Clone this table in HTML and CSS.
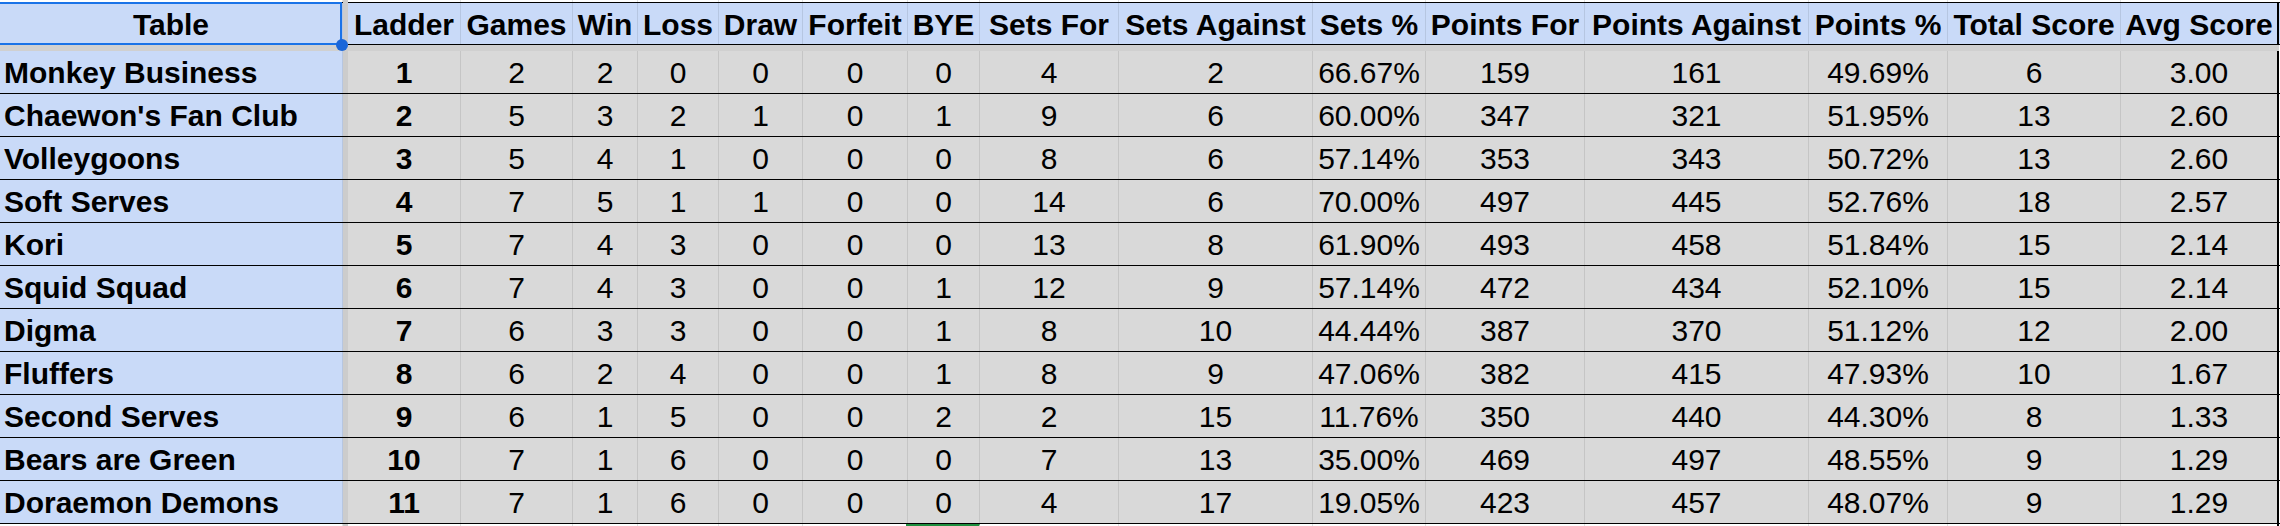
FILE: index.html
```html
<!DOCTYPE html>
<html>
<head>
<meta charset="utf-8">
<title>Ladder Table</title>
<link rel="stylesheet" href="styles.css">
</head>
<body>
<div class="sheet">
  <div class="row top-strip">
    <div class="cell"></div><div class="divider"></div>
    <div class="cell"></div><div class="cell"></div><div class="cell"></div><div class="cell"></div><div class="cell"></div><div class="cell"></div><div class="cell"></div><div class="cell"></div><div class="cell"></div><div class="cell"></div><div class="cell"></div><div class="cell"></div><div class="cell"></div><div class="cell"></div><div class="cell last"></div>
  </div>
  <div class="row head">
    <div class="cell name-head">Table<span class="selection"></span><span class="handle"></span></div><div class="divider"></div>
    <div class="cell">Ladder</div><div class="cell">Games</div><div class="cell">Win</div><div class="cell">Loss</div><div class="cell">Draw</div><div class="cell">Forfeit</div><div class="cell">BYE</div><div class="cell">Sets For</div><div class="cell">Sets Against</div><div class="cell">Sets %</div><div class="cell">Points For</div><div class="cell">Points Against</div><div class="cell">Points %</div><div class="cell">Total Score</div><div class="cell last">Avg Score</div>
  </div>
  <div class="row freeze"><div class="fz"></div><div class="divider"></div><div class="fz rest"></div></div>

  <div class="row data"><div class="cell name">Monkey Business</div><div class="divider"></div><div class="cell rank">1</div><div class="cell">2</div><div class="cell">2</div><div class="cell">0</div><div class="cell">0</div><div class="cell">0</div><div class="cell">0</div><div class="cell">4</div><div class="cell">2</div><div class="cell">66.67%</div><div class="cell">159</div><div class="cell">161</div><div class="cell">49.69%</div><div class="cell">6</div><div class="cell last">3.00</div></div>
  <div class="row data"><div class="cell name">Chaewon's Fan Club</div><div class="divider"></div><div class="cell rank">2</div><div class="cell">5</div><div class="cell">3</div><div class="cell">2</div><div class="cell">1</div><div class="cell">0</div><div class="cell">1</div><div class="cell">9</div><div class="cell">6</div><div class="cell">60.00%</div><div class="cell">347</div><div class="cell">321</div><div class="cell">51.95%</div><div class="cell">13</div><div class="cell last">2.60</div></div>
  <div class="row data"><div class="cell name">Volleygoons</div><div class="divider"></div><div class="cell rank">3</div><div class="cell">5</div><div class="cell">4</div><div class="cell">1</div><div class="cell">0</div><div class="cell">0</div><div class="cell">0</div><div class="cell">8</div><div class="cell">6</div><div class="cell">57.14%</div><div class="cell">353</div><div class="cell">343</div><div class="cell">50.72%</div><div class="cell">13</div><div class="cell last">2.60</div></div>
  <div class="row data"><div class="cell name">Soft Serves</div><div class="divider"></div><div class="cell rank">4</div><div class="cell">7</div><div class="cell">5</div><div class="cell">1</div><div class="cell">1</div><div class="cell">0</div><div class="cell">0</div><div class="cell">14</div><div class="cell">6</div><div class="cell">70.00%</div><div class="cell">497</div><div class="cell">445</div><div class="cell">52.76%</div><div class="cell">18</div><div class="cell last">2.57</div></div>
  <div class="row data"><div class="cell name">Kori</div><div class="divider"></div><div class="cell rank">5</div><div class="cell">7</div><div class="cell">4</div><div class="cell">3</div><div class="cell">0</div><div class="cell">0</div><div class="cell">0</div><div class="cell">13</div><div class="cell">8</div><div class="cell">61.90%</div><div class="cell">493</div><div class="cell">458</div><div class="cell">51.84%</div><div class="cell">15</div><div class="cell last">2.14</div></div>
  <div class="row data"><div class="cell name">Squid Squad</div><div class="divider"></div><div class="cell rank">6</div><div class="cell">7</div><div class="cell">4</div><div class="cell">3</div><div class="cell">0</div><div class="cell">0</div><div class="cell">1</div><div class="cell">12</div><div class="cell">9</div><div class="cell">57.14%</div><div class="cell">472</div><div class="cell">434</div><div class="cell">52.10%</div><div class="cell">15</div><div class="cell last">2.14</div></div>
  <div class="row data"><div class="cell name">Digma</div><div class="divider"></div><div class="cell rank">7</div><div class="cell">6</div><div class="cell">3</div><div class="cell">3</div><div class="cell">0</div><div class="cell">0</div><div class="cell">1</div><div class="cell">8</div><div class="cell">10</div><div class="cell">44.44%</div><div class="cell">387</div><div class="cell">370</div><div class="cell">51.12%</div><div class="cell">12</div><div class="cell last">2.00</div></div>
  <div class="row data"><div class="cell name">Fluffers</div><div class="divider"></div><div class="cell rank">8</div><div class="cell">6</div><div class="cell">2</div><div class="cell">4</div><div class="cell">0</div><div class="cell">0</div><div class="cell">1</div><div class="cell">8</div><div class="cell">9</div><div class="cell">47.06%</div><div class="cell">382</div><div class="cell">415</div><div class="cell">47.93%</div><div class="cell">10</div><div class="cell last">1.67</div></div>
  <div class="row data"><div class="cell name">Second Serves</div><div class="divider"></div><div class="cell rank">9</div><div class="cell">6</div><div class="cell">1</div><div class="cell">5</div><div class="cell">0</div><div class="cell">0</div><div class="cell">2</div><div class="cell">2</div><div class="cell">15</div><div class="cell">11.76%</div><div class="cell">350</div><div class="cell">440</div><div class="cell">44.30%</div><div class="cell">8</div><div class="cell last">1.33</div></div>
  <div class="row data"><div class="cell name">Bears are Green</div><div class="divider"></div><div class="cell rank">10</div><div class="cell">7</div><div class="cell">1</div><div class="cell">6</div><div class="cell">0</div><div class="cell">0</div><div class="cell">0</div><div class="cell">7</div><div class="cell">13</div><div class="cell">35.00%</div><div class="cell">469</div><div class="cell">497</div><div class="cell">48.55%</div><div class="cell">9</div><div class="cell last">1.29</div></div>
  <div class="row data"><div class="cell name">Doraemon Demons</div><div class="divider"></div><div class="cell rank">11</div><div class="cell">7</div><div class="cell">1</div><div class="cell">6</div><div class="cell">0</div><div class="cell">0</div><div class="cell">0</div><div class="cell">4</div><div class="cell">17</div><div class="cell">19.05%</div><div class="cell">423</div><div class="cell">457</div><div class="cell">48.07%</div><div class="cell">9</div><div class="cell last">1.29</div></div>

  <div class="row tail">
    <div class="cell"></div><div class="divider"></div>
    <div class="cell"></div><div class="cell"></div><div class="cell"></div><div class="cell"></div><div class="cell"></div><div class="cell"></div><div class="cell cursor"></div><div class="cell"></div><div class="cell"></div><div class="cell"></div><div class="cell"></div><div class="cell"></div><div class="cell"></div><div class="cell"></div><div class="cell last"></div>
  </div>
</div>
</body>
</html>
```

FILE: styles.css
```css
html, body {
  margin: 0;
  padding: 0;
  background: #ffffff;
}

body {
  width: 2280px;
  height: 526px;
  overflow: hidden;
  font-family: "Liberation Sans", Arial, sans-serif;
  font-size: 30px;
  color: #000000;
}

.sheet {
  display: flex;
  flex-direction: column;
}

.row {
  display: grid;
  grid-template-columns: 343px 5px 113px 112px 65px 81px 84px 105px 72px 139px 194px 113px 159px 224px 139px 173px 158px;
  box-sizing: border-box;
}

.cell {
  box-sizing: border-box;
  border-right: 1px solid rgba(0, 0, 0, 0.09);
  text-align: center;
  white-space: nowrap;
  overflow: visible;
}

.cell.last {
  border-right: 2px solid #000000;
}

.divider {
  background: #cccccc;
}

/* strip above the header */
.top-strip {
  height: 2px;
}
.top-strip .cell {
  border-right-color: #e2e3e3;
}
.top-strip .cell.last {
  border-right: 2px solid #ffffff;
}

/* header row */
.head {
  height: 43px;
  border-top: 1px solid #000000;
  border-bottom: 1px solid #000000;
  background: #c9daf8;
}
.head .cell {
  font-weight: bold;
  line-height: 39px;
  padding-top: 2px;
  background: #c9daf8;
}
.head .divider {
  margin-top: -1px;
  margin-bottom: -1px;
}

.name-head {
  position: relative;
}

.selection {
  position: absolute;
  top: -1px;
  left: -2px;
  right: 0;
  bottom: -1px;
  border: 2px solid #1a73e8;
  pointer-events: none;
}

.handle {
  position: absolute;
  right: -6px;
  bottom: -7px;
  width: 12px;
  height: 12px;
  border-radius: 50%;
  background: #1a66d9;
  z-index: 2;
}

/* frozen row divider */
.freeze {
  height: 6px;
}
.fz {
  background: #d0d0d0;
}
.fz.rest {
  grid-column: 3 / -1;
}

/* data rows */
.data {
  height: 43px;
  border-bottom: 1px solid #000000;
}
.data .cell {
  background: #d9d9d9;
  line-height: 40px;
  padding-top: 2px;
}
.data .cell.name {
  background: #c9daf8;
  font-weight: bold;
  text-align: left;
  padding-left: 4px;
}
.data .cell.rank {
  font-weight: bold;
}

/* strip below the table */
.tail {
  height: 3px;
}
.tail .cell {
  border-right-color: #e2e3e3;
}
.tail .cell.last {
  border-right: 2px solid #000000;
}
.tail .cell.cursor {
  border-top: 2px solid #1e8e3e;
  margin-left: -2px;
}
```
